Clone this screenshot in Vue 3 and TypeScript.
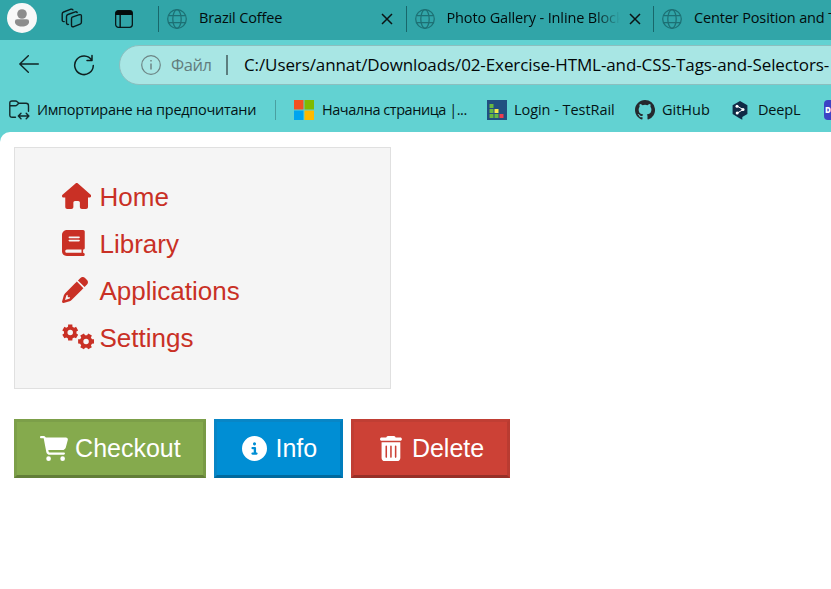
<script setup lang="ts">
interface Tab { title: string; kind: string }
interface Glyph { label: string; kind: string; box: string; width: number; path: string }

const tabs: Tab[] = [
  { title: 'Brazil Coffee', kind: 'first' },
  { title: 'Photo Gallery - Inline Block', kind: 'second' },
  { title: 'Center Position and T', kind: 'third' },
]

// Builds a six-toothed gear outline with a round hole.
function gear(cx: number, cy: number, turn: number): string {
  const pts: string[] = []
  for (let i = 0; i < 6; i++) {
    const a = ((turn + i * 60) * Math.PI) / 180
    for (const [r, d] of [[124, -0.36], [162, -0.26], [162, 0.26], [124, 0.36]]) {
      pts.push(`${(cx + r * Math.cos(a + d)).toFixed(1)} ${(cy + r * Math.sin(a + d)).toFixed(1)}`)
    }
  }
  return `M${pts.join('L')}ZM${cx - 54} ${cy}a54 54 0 1 0 108 0a54 54 0 1 0-108 0Z`
}

const menu: Glyph[] = [
  { label: 'Home', kind: 'home', box: '0 0 576 512', width: 29.25, path: 'M575.8 255.5c0 18-15 32.1-32 32.1h-32l.7 160.2c0 2.7-.2 5.4-.5 8.1V472c0 22.1-17.9 40-40 40H392c-22.1 0-40-17.9-40-40V384c0-17.7-14.3-32-32-32H256c-17.7 0-32 14.3-32 32v88c0 22.1-17.9 40-40 40H104c-22.1 0-40-17.9-40-40V287.6H32c-18 0-32-14-32-32.1c0-9 3-17 10-24L266.4 8c7-7 15-8 22-8s15 2 21 7L564.8 231.5c8 7 12 15 11 24z' },
  { label: 'Library', kind: 'library', box: '0 0 448 512', width: 22.75, path: 'M96 0C43 0 0 43 0 96V416c0 53 43 96 96 96H416c17.7 0 32-14.3 32-32s-14.3-32-32-32V384c17.7 0 32-14.3 32-32V32c0-17.7-14.3-32-32-32H96zm0 384H384v64H96c-17.7 0-32-14.3-32-32s14.3-32 32-32zm32-240c0-8.8 7.2-16 16-16H336c8.8 0 16 7.2 16 16s-7.2 16-16 16H144c-8.8 0-16-7.2-16-16zm16 48H336c8.8 0 16 7.2 16 16s-7.2 16-16 16H144c-8.8 0-16-7.2-16-16s7.2-16 16-16z' },
  { label: 'Applications', kind: 'applications', box: '0 0 512 512', width: 26, path: 'M410.3 231l11.3-11.3-33.9-33.9-62.1-62.1L291.7 89.8l-11.3 11.3-22.6 22.6L58.6 322.9c-10.4 10.4-18 23.3-22.2 37.4L1 480.7c-2.5 8.4-.2 17.5 6.1 23.7s15.3 8.5 23.7 6.1l120.3-35.4c14.1-4.2 27-11.8 37.4-22.2L387.7 253.7 410.3 231zM160 399.4l-9.1 22.7c-4 3.1-8.500 5.400-13.300 6.900L59.400 452l23-78.100c1.400-4.900 3.800-9.400 6.900-13.300l22.700-9.100v32c0 8.800 7.200 16 16 16h32zM362.700 18.700L314.300 67.100l129.900 129.900 48.400-48.400c25-25 25-65.500 0-90.500L453.300 18.700c-25-25-65.500-25-90.500 0z' },
  { label: 'Settings', kind: 'settings', box: '0 0 640 512', width: 32.5, path: gear(162, 168, 30) + gear(474, 343, 0) },
]

const buttons: Glyph[] = [
  { label: 'Checkout', kind: 'checkout', box: '0 0 576 512', width: 28.1, path: 'M0 24C0 10.7 10.7 0 24 0H69.5c22 0 41.5 12.8 50.6 32h411c26.3 0 45.5 25 38.6 50.4l-41 152.3c-8.5 31.4-37 53.3-69.5 53.3H170.7l5.4 28.5c2.2 11.3 12.1 19.5 23.6 19.5H488c13.3 0 24 10.7 24 24s-10.7 24-24 24H199.7c-34.6 0-64.3-24.6-70.7-58.5L77.4 54.5c-.7-3.8-4-6.5-7.9-6.5H24C10.7 48 0 37.3 0 24zM128 464a48 48 0 1 1 96 0 48 48 0 1 1-96 0zm336-48a48 48 0 1 1 0 96 48 48 0 1 1 0-96z' },
  { label: 'Info', kind: 'info', box: '0 0 512 512', width: 25, path: 'M256 512A256 256 0 1 0 256 0a256 256 0 1 0 0 512zM216 336h24V272H216c-13.3 0-24-10.7-24-24s10.7-24 24-24h48c13.3 0 24 10.7 24 24v88h8c13.3 0 24 10.7 24 24s-10.7 24-24 24H216c-13.3 0-24-10.7-24-24s10.7-24 24-24zm40-208a32 32 0 1 1 0 64 32 32 0 1 1 0-64z' },
  { label: 'Delete', kind: 'delete', box: '0 0 448 512', width: 21.9, path: 'M135.2 17.7C140.6 6.8 151.7 0 163.8 0H284.2c12.1 0 23.2 6.8 28.6 17.7L320 32h96c17.7 0 32 14.3 32 32s-14.3 32-32 32H32C14.3 96 0 81.7 0 64S14.3 32 32 32h96l7.2-14.3zM32 128H416V448c0 35.3-28.7 64-64 64H96c-35.3 0-64-28.7-64-64V128zm96 64c-8.8 0-16 7.2-16 16V432c0 8.8 7.2 16 16 16s16-7.2 16-16V208c0-8.8-7.2-16-16-16zm96 0c-8.8 0-16 7.2-16 16V432c0 8.8 7.2 16 16 16s16-7.2 16-16V208c0-8.8-7.2-16-16-16zm96 0c-8.8 0-16 7.2-16 16V432c0 8.8 7.2 16 16 16s16-7.2 16-16V208c0-8.8-7.2-16-16-16z' },
]
</script>

<template>
  <div class="window">
    <header class="tabbar">
      <svg class="avatar" viewBox="0 0 30 30"><circle cx="15" cy="15" r="15" fill="#f8f8f8" /><circle cx="15" cy="11" r="4.8" fill="#8c8c8c" /><path d="M10.2 16.300h9.600a2.300 2.300 0 0 1 2.300 2.400c0 3-3 4.800-7.100 4.800s-7.100-1.800-7.100-4.800a2.300 2.300 0 0 1 2.300-2.400z" fill="#8c8c8c" /></svg>
      <svg class="workspaces" viewBox="0 0 22 20" fill="none" stroke="#0a1c1d" stroke-width="1.4" stroke-linejoin="round" stroke-linecap="round"><path d="M11.200 9.200l7.200-2.500q2-.5 2 1.400v6.200q0 1.300-1.300 1.800l-6.300 2.600q-2.300.5-2.300-1.500V10.900q0-1.300.7-1.700zM7.500 16.400q-2 .3-2-1.600V8.600q0-1.600 1.400-2.100l7.400-2.600q1.300-.3 1.900.6M3.200 13.600q-2 .2-2-1.600V6q0-1.500 1.400-2L10 1.200q1.300-.3 1.900.6" /></svg>
      <svg class="tabactions" viewBox="0 0 18 18"><rect x=".65" y=".65" width="16.700" height="16.700" rx="2.800" fill="none" stroke="#081a1b" stroke-width="1.300" /><path d="M.5 5V3Q.5.5 3 .5h12Q17.500.5 17.500 3v2zM4.500 5h1.300v12.500H4.500z" fill="#050b0b" /></svg>
      <div v-for="tab in tabs" :key="tab.title" class="tab" :class="tab.kind">
        <svg class="globe" viewBox="0 0 20 20" fill="none" stroke="#1d7074" stroke-width="1.25"><circle cx="10" cy="10" r="9.300" /><ellipse cx="10" cy="10" rx="4.200" ry="9.300" /><path d="M1.500 6.500h17M1.500 13.500h17" /></svg>
        <span class="tabtitle">{{ tab.title }}</span>
        <svg class="close" viewBox="0 0 12 12" stroke="#0b1314" stroke-width="1.5"><path d="M1 1l10 10M11 1L1 11" /></svg>
      </div>
    </header>
    <section class="chrome">
      <div class="navrow">
        <svg class="back" viewBox="0 0 20 18" fill="none" stroke="#0f2424" stroke-width="1.4" stroke-linecap="round" stroke-linejoin="round"><path d="M19.300 9H.8M9.300.7L.8 9l8.500 8.300" /></svg>
        <svg class="reload" viewBox="0 0 22 22" fill="none" stroke="#0f2020" stroke-width="1.500" stroke-linecap="round" stroke-linejoin="round"><path d="M18.800 6.200A9.300 9.300 0 1 0 20.300 11.500M19 1.500v5h-5" /></svg>
        <div class="address">
          <svg class="infomark" viewBox="0 0 20 20" fill="none" stroke="#6d8585" stroke-width="1.200"><circle cx="10" cy="10" r="9.300" /><path d="M10 8.500v6M10 5v1.600" stroke-width="1.500" /></svg>
          <span class="scheme">Файл</span>
          <i class="divider"></i>
          <span class="url">C:/Users/annat/Downloads/02-Exercise-HTML-and-CSS-Tags-and-Selectors-</span>
        </div>
      </div>
      <div class="bookmarks">
        <svg class="import" viewBox="0 0 21 20" fill="none" stroke="#122a2b" stroke-width="1.400" stroke-linecap="round" stroke-linejoin="round"><path d="M6.500 17.300H3.200Q.8 17.300.8 15V3Q.8 1 3 1h3.500q1 0 1.800.8l1.500 1.400H17q2.500 0 2.500 2.500v5.500M1 5.800h5.300q1 0 1.700-.8l1.800-1.800M9.300 16h10.500M12 13.300L9.300 16l2.700 2.700M17.200 13.300l2.700 2.700-2.700 2.700" /></svg>
        <span class="bm importtext">Импортиране на предпочитани</span>
        <i class="rule"></i>
        <svg class="fav start" viewBox="0 0 20 20"><path fill="#f25022" d="M0 0h9.500v9.500H0z" /><path fill="#7fba00" d="M10.500 0H20v9.500h-9.500z" /><path fill="#00a4ef" d="M0 10.500h9.500V20H0z" /><path fill="#ffb900" d="M10.500 10.500H20V20h-9.500z" /></svg>
        <span class="bm starttext">Начална страница |...</span>
        <svg class="fav rail" viewBox="0 0 20 20"><path fill="#214f80" d="M0 0h20v20H0z" /><path fill="#69b842" d="M2.500 4h4v4h-4zM2.500 9h4v4h-4zM2.500 14h4v4h-4zM7.500 14h4v4h-4z" /><path fill="#f7e94e" d="M7.500 9h4v4h-4z" /><path fill="#ee3c50" d="M12.500 14h4v4h-4z" /></svg>
        <span class="bm railtext">Login - TestRail</span>
        <svg class="fav hub" viewBox="0 0 16 16"><path fill="#25292e" d="M8 0C3.580 0 0 3.580 0 8c0 3.540 2.290 6.530 5.470 7.590.4.070.55-.17.55-.38 0-.19-.01-.82-.01-1.490-2.010.37-2.530-.49-2.690-.94-.09-.23-.48-.94-.82-1.130-.28-.15-.68-.52-.01-.53.63-.01 1.080.58 1.230.82.72 1.210 1.870.87 2.330.66.07-.52.28-.87.51-1.070-1.780-.2-3.640-.89-3.640-3.950 0-.87.31-1.590.82-2.150-.08-.2-.36-1.020.08-2.120 0 0 .67-.21 2.200.82a7.600 7.600 0 0 1 4 0c1.530-1.040 2.200-.82 2.200-.82.44 1.100.16 1.920.08 2.120.51.56.82 1.270.82 2.150 0 3.070-1.870 3.750-3.650 3.950.29.25.54.73.54 1.480 0 1.070-.01 1.930-.01 2.200 0 .21.15.46.55.38A8 8 0 0 0 8 0z" /></svg>
        <span class="bm hubtext">GitHub</span>
        <svg class="deepl" viewBox="0 0 16 19"><path fill="#102b46" d="M8 0l7.400 4.200v8.900L10.300 16v2.700L7.500 17.200.6 13.100V4.200z" /><path d="M5 5l6.200 3.600L5 12.200" fill="none" stroke="#fff" stroke-width="1" /><circle cx="5" cy="5.200" r="1.500" fill="#fff" /><circle cx="11" cy="8.600" r="1.500" fill="#fff" /><circle cx="5.200" cy="12" r="1.500" fill="#fff" /></svg>
        <span class="bm deepltext">DeepL</span>
        <span class="devtile">D</span>
      </div>
    </section>
    <div class="backdrop">
      <main class="page">
        <nav class="menu">
          <a v-for="item in menu" :key="item.label" class="item">
            <span class="slot"><svg class="glyph" :class="item.kind" :viewBox="item.box" :width="item.width" height="26"><path :d="item.path" fill="currentColor" fill-rule="evenodd" /></svg></span>
            <span class="label">{{ item.label }}</span>
          </a>
        </nav>
        <div class="actions">
          <button v-for="b in buttons" :key="b.label" class="btn" :class="b.kind">
            <svg class="glyph" :viewBox="b.box" :width="b.width" height="25"><path :d="b.path" fill="currentColor" fill-rule="evenodd" /></svg>
            <span>{{ b.label }}</span>
          </button>
        </div>
      </main>
    </div>
  </div>
</template>

<style>
body { margin: 0; overflow: hidden; }
</style>

<style scoped>
.window { width: 831px; height: 589px; overflow: hidden; display: flex; flex-direction: column; font-family: "Open Sans", "Noto Sans", sans-serif; background: #fff; }
svg { flex: none; display: block; }
span { white-space: nowrap; }
.tabbar { height: 40px; flex: none; background: #31a5a8; display: flex; align-items: center; overflow: hidden; box-sizing: border-box; padding: 0 0 4px 7px; }
.avatar { width: 30px; height: 30px; }
.workspaces { width: 22px; height: 20px; margin-left: 24px; }
.tabactions { width: 18px; height: 18px; margin: 1px 0 0 32px; }
.tab { height: 26px; flex: none; width: 247.5px; box-sizing: border-box; border-left: 1px solid #18676b; display: flex; align-items: center; padding-left: 8px; margin-top: 2px; }
.first { margin-left: 25px; }
.globe { width: 20px; height: 20px; }
.tabtitle { margin-left: 12px; width: 173px; flex: none; overflow: hidden; font-size: 14.5px; line-height: 22px; color: #020b0c; margin-top: -2px; letter-spacing: -0.14px; }
.second .tabtitle { mask-image: linear-gradient(to right, #000 148px, transparent 173px); }
.close { width: 12px; height: 12px; margin-left: 9px; }
.chrome { height: 92px; flex: none; background: #62d2d2; display: flex; flex-direction: column; }
.navrow { height: 50px; display: flex; align-items: center; padding-left: 19px; overflow: hidden; }
.back { width: 20px; height: 18px; margin-top: -2px; }
.reload { width: 22px; height: 22px; margin: -1px 0 0 34px; }
.address { height: 40px; width: 760px; flex: none; box-sizing: border-box; margin-left: 24px; border: 1px solid #8bbfbf; border-radius: 20px; background: #a8e6e4; display: flex; align-items: center; padding-left: 21px; }
.infomark { width: 20px; height: 20px; flex: none; }
.scheme { margin-left: 10px; width: 42px; flex: none; font-size: 16.5px; color: #627c7c; letter-spacing: -0.4px; margin-top: -1px; }
.divider { width: 2px; height: 20px; flex: none; background: #5c7e7e; margin-left: 13px; }
.url { margin-left: 16px; font-size: 17px; color: #020708; letter-spacing: -0.1px; margin-top: -1px; }
.bookmarks { height: 40px; display: flex; align-items: center; padding-left: 9px; overflow: hidden; }
.import { width: 21px; height: 20px; }
.bm { font-size: 14.5px; color: #041415; flex: none; letter-spacing: -0.2px; margin-top: -2px; }
.importtext { margin-left: 7px; width: 238px; letter-spacing: -0.28px; }
.rule { width: 1px; height: 20px; background: #4a9fa0; flex: none; }
.fav { width: 20px; height: 20px; }
.start { margin-left: 18px; }
.starttext { margin-left: 8px; width: 165px; letter-spacing: -0.45px; }
.railtext { margin-left: 7px; width: 121px; letter-spacing: -0.05px; }
.hubtext { margin-left: 7px; width: 70px; letter-spacing: 0; }
.deepl { width: 16px; height: 19px; }
.deepltext { margin-left: 10px; width: 66px; }
.devtile { width: 20px; height: 20px; flex: none; border-radius: 4px; background: #3c43c4; color: #fff; font-size: 8px; font-weight: 800; line-height: 20px; padding-left: 1px; }
.backdrop { flex: 1; background: #62d2d2; min-height: 0; display: flex; }
.page { flex: 1; background: #fff; border-top-left-radius: 10px; padding: 15px 0 0 14px; font-family: "Liberation Sans", Arial, sans-serif; font-size: 26px; }
.menu { width: 377px; height: 242px; box-sizing: border-box; border: 1px solid #e0e0e0; background: #f5f5f5; padding: 25px 0 0 47px; }
.item { height: 47px; display: flex; align-items: center; color: #c93025; }
.slot { width: 37.5px; flex: none; margin-top: -1px; }
.label { margin-top: 2px; }
.actions { display: flex; gap: 8px; margin-top: 30px; }
.btn { height: 59px; box-sizing: border-box; border: 3px solid; display: flex; align-items: center; color: #fff; font: inherit; font-size: 25px; padding: 0; }
.btn .glyph { margin-top: -1px; }
.checkout { width: 192px; background: #85aa4d; border-color: #7c9f49 #789a45 #627e38 #7c9f49; padding-left: 23px; gap: 7px; }
.info { width: 129px; background: #008ed4; border-color: #0886c6 #007dbd #00699d #0886c6; padding-left: 25px; gap: 8.5px; }
.delete { width: 159px; background: #cc4136; border-color: #c03e34 #b93b31 #973028 #c03e34; padding-left: 26px; gap: 10px; }
</style>
